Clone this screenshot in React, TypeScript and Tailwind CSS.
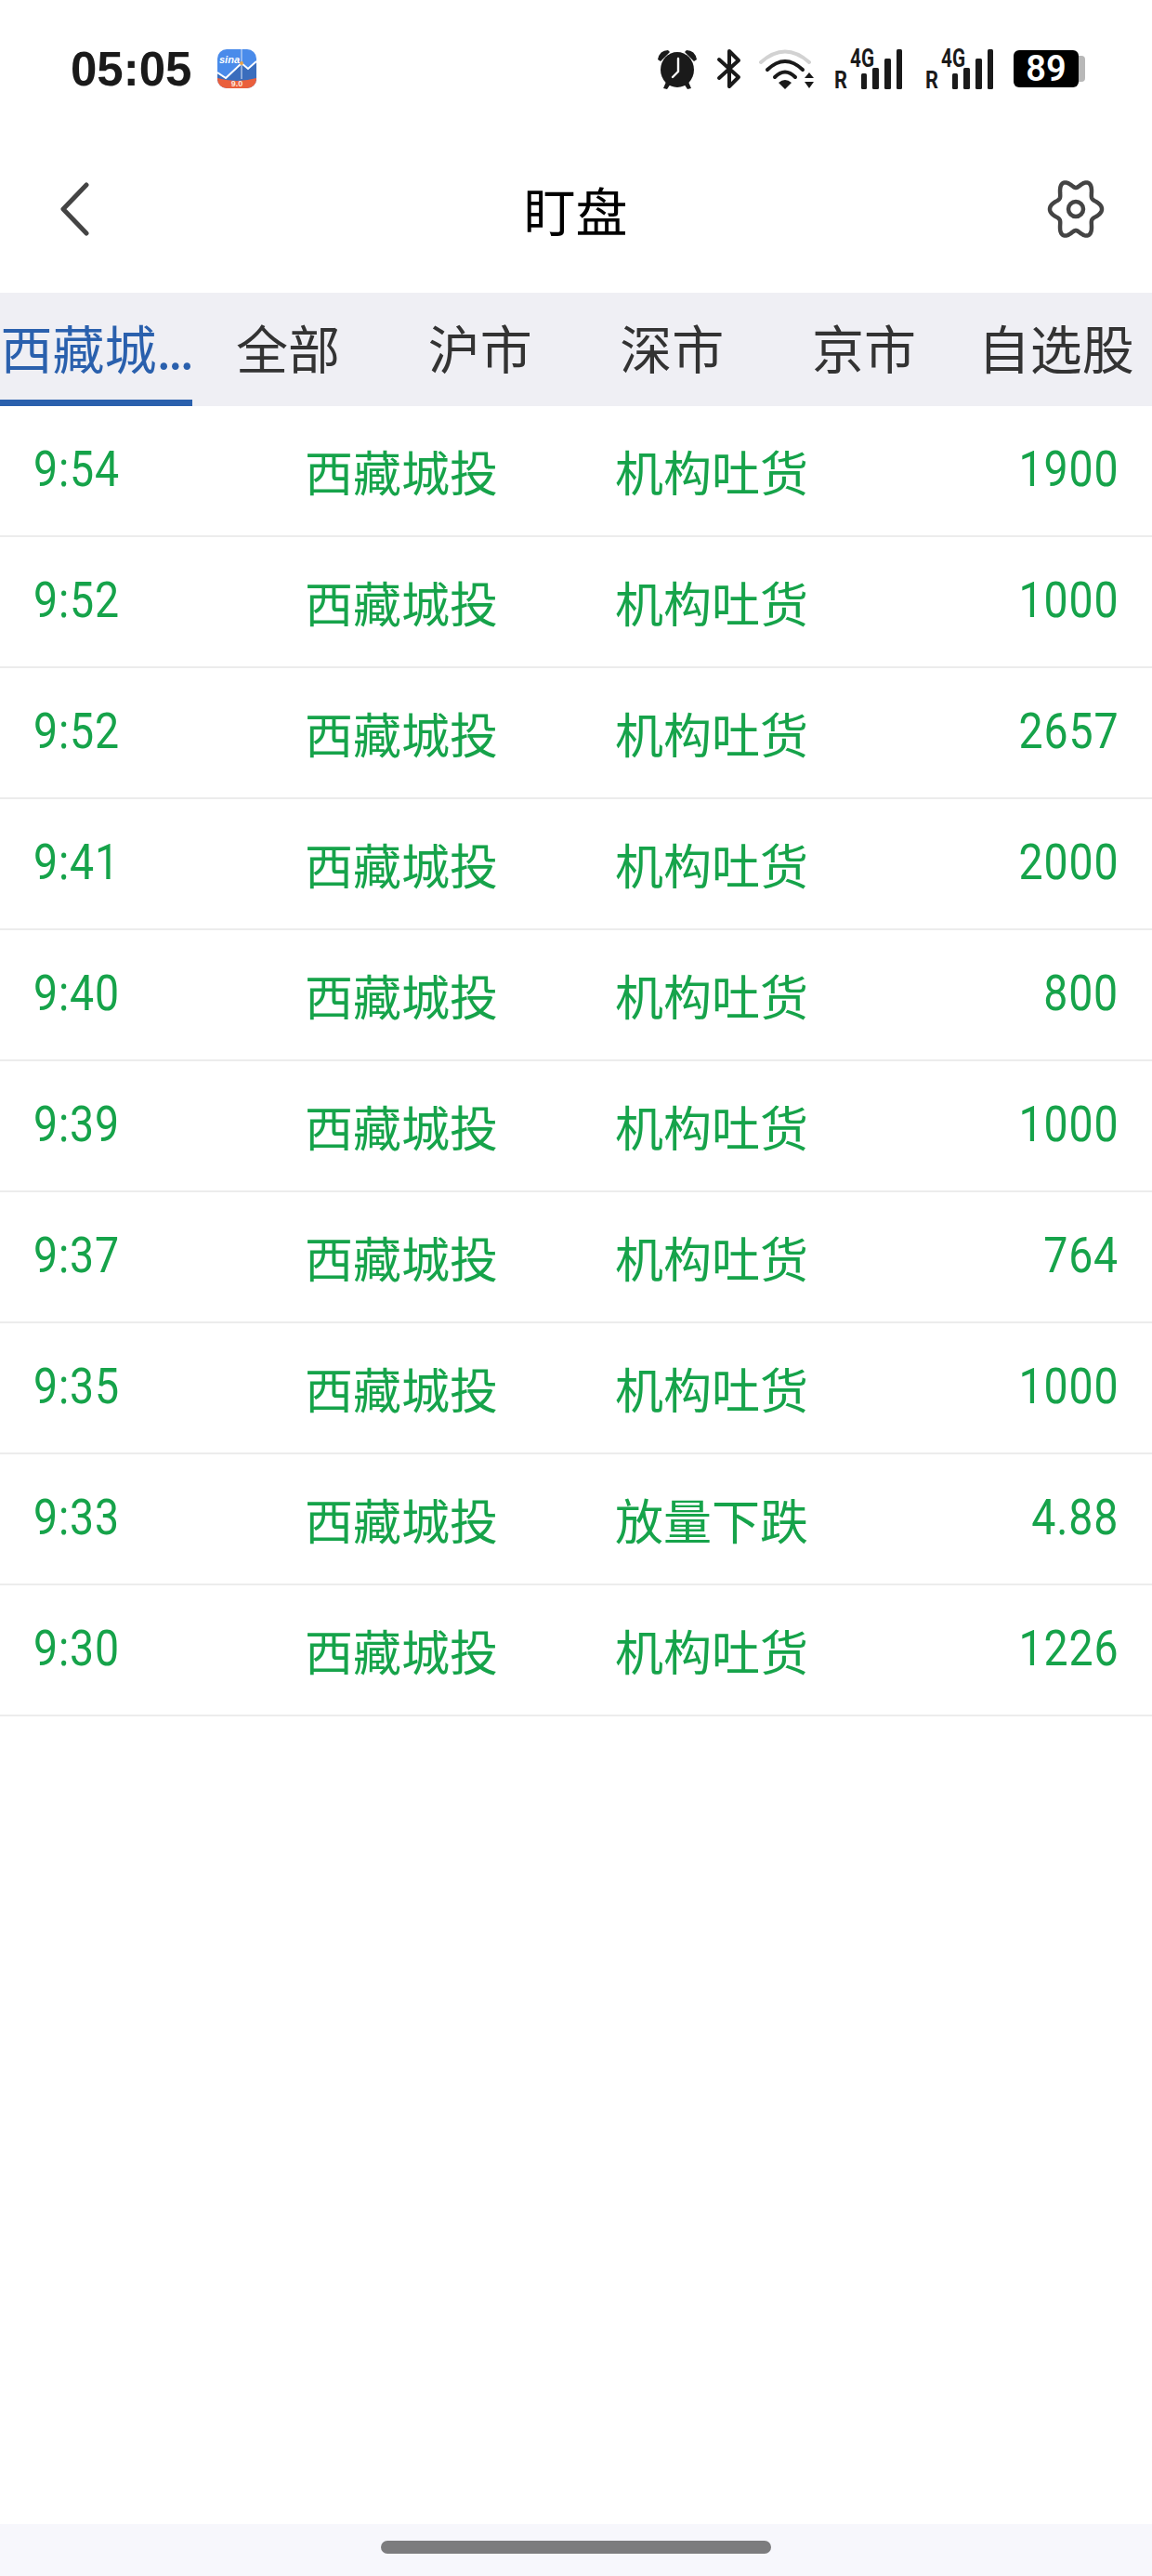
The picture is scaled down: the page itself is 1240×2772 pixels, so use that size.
const rows = [
  { time: '9:54', type: '机构吐货', value: '1900' },
  { time: '9:52', type: '机构吐货', value: '1000' },
  { time: '9:52', type: '机构吐货', value: '2657' },
  { time: '9:41', type: '机构吐货', value: '2000' },
  { time: '9:40', type: '机构吐货', value: '800' },
  { time: '9:39', type: '机构吐货', value: '1000' },
  { time: '9:37', type: '机构吐货', value: '764' },
  { time: '9:35', type: '机构吐货', value: '1000' },
  { time: '9:33', type: '放量下跌', value: '4.88' },
  { time: '9:30', type: '机构吐货', value: '1226' },
];

const tabs = ['全部', '沪市', '深市', '京市', '自选股'];

// six soft lobes, dips at top and bottom
const gearPath = () => {
  const pts: string[] = [];
  for (let i = 0; i < 180; i++) {
    const a = (i / 180) * Math.PI * 2;
    const r = 24 + 4 * Math.cos(6 * a);
    pts.push(`${(32 + r * Math.cos(a)).toFixed(2)} ${(32 + 1.15 * r * Math.sin(a)).toFixed(2)}`);
  }
  return `M${pts.join('L')}Z`;
};

const AppIcon = () => (
  <svg width="42" height="42" viewBox="0 0 42 42" className="ml-[28px]">
    <rect width="42" height="42" rx="10" fill="#4a8bea" />
    <path d="M0 26 L10 32 L26 15 L33 22 L42 14 V34 H0Z" fill="#3a6dbd" />
    <path d="M0 25 L9 31 L26 15 L33 21 L42 13" fill="none" stroke="#fff" strokeWidth="2" />
    <path d="M26 0V32" stroke="#dfe8f7" strokeWidth="1" />
    <circle cx="26" cy="15" r="2" fill="#e6a24a" />
    <path d="M0 31 Q21 37 42 31 V32 A10 10 0 0 1 32 42 H10 A10 10 0 0 1 0 32Z" fill="#ea5f3c" />
    <text x="2" y="15" fontSize="11" fontStyle="italic" fontWeight="700" fill="#fff" fontFamily="'Liberation Sans', sans-serif">sina</text>
    <text x="21" y="40" fontSize="9" textAnchor="middle" fontWeight="700" fill="#fde7dd" fontFamily="'Liberation Sans', sans-serif">9.0</text>
  </svg>
);

const AlarmIcon = () => (
  <svg width="44" height="44" viewBox="0 0 44 44">
    <path d="M1 12 Q3 2 12 2 L14 4 L4 14Z M43 12 Q41 2 32 2 L30 4 L40 14Z" fill="#1a1a1a" />
    <path d="M10 36 L7 43 L11 44 L15 38Z M34 36 L37 43 L33 44 L29 38Z" fill="#1a1a1a" />
    <ellipse cx="22" cy="23" rx="18" ry="19" fill="#1a1a1a" />
    <path d="M23 11 V25 L17 31" fill="none" stroke="#fff" strokeWidth="2.4" strokeLinecap="round" strokeLinejoin="round" />
  </svg>
);

const BluetoothIcon = () => (
  <svg width="28" height="44" viewBox="0 0 28 44">
    <path d="M3 12 L24 31 L14 41 V3 L24 13 L3 32" fill="none" stroke="#1a1a1a" strokeWidth="4" strokeLinecap="round" strokeLinejoin="round" />
  </svg>
);

const WifiIcon = () => (
  <svg width="60" height="44" viewBox="0 0 60 44">
    <path d="M2 15 Q28 -8 54 15" fill="none" stroke="#d2d2d2" strokeWidth="4" strokeLinecap="round" />
    <path d="M9 23 Q28 5 47 23" fill="none" stroke="#1a1a1a" strokeWidth="4" strokeLinecap="round" />
    <path d="M17 31 Q28 20 39 31" fill="none" stroke="#1a1a1a" strokeWidth="4" strokeLinecap="round" />
    <path d="M21 37 Q28 31 35 37 L28 44Z" fill="#1a1a1a" />
    <path d="M49 32 L54 26 L59 32Z M49 36 H59 L54 43Z" fill="#1a1a1a" />
  </svg>
);

const SignalIcon = () => (
  <svg width="74" height="44" viewBox="0 0 74 44" className="overflow-visible">
    <text x="0" y="43" fontSize="25" textLength="14" lengthAdjust="spacingAndGlyphs" fontWeight="700" fill="#1a1a1a" fontFamily="'Roboto', sans-serif">R</text>
    <text x="17" y="20" fontSize="28" textLength="26" lengthAdjust="spacingAndGlyphs" fontWeight="700" fill="#1a1a1a" fontFamily="'Roboto', sans-serif">4G</text>
    <rect x="29" y="27" width="6" height="17" rx="1.5" fill="#1a1a1a" />
    <rect x="41" y="21" width="7" height="23" rx="1.5" fill="#1a1a1a" />
    <rect x="54" y="11" width="7" height="33" rx="1.5" fill="#1a1a1a" />
    <rect x="67" y="1" width="6" height="43" rx="1.5" fill="#1a1a1a" />
  </svg>
);

const BatteryIcon = () => (
  <div className="flex items-center">
    <div className="w-[70px] h-[40px] bg-black rounded-[6px] flex items-center justify-center text-white text-[38px] leading-none font-semibold font-['Roboto',sans-serif]">
      89
    </div>
    <div className="w-[7px] h-[28px] bg-[#b8b8b8] rounded-r-[4px]" />
  </div>
);

export default function App() {
  return (
    <div className="w-[1240px] h-[2772px] bg-white flex flex-col font-['Noto_Sans_CJK_SC',sans-serif]">
      <div className="h-[150px] shrink-0 flex items-start pt-[52px] pl-[76px] pr-[72px] justify-between">
        <div className="flex items-center h-[44px]">
          <span className="text-[51px] leading-none font-bold text-[#1a1a1a] font-['Liberation_Sans',sans-serif]">05:05</span>
          <AppIcon />
        </div>
        <div className="flex items-center">
          <AlarmIcon />
          <div className="ml-[20px]"><BluetoothIcon /></div>
          <div className="ml-[18px]"><WifiIcon /></div>
          <div className="ml-[21px]"><SignalIcon /></div>
          <div className="ml-[24px]"><SignalIcon /></div>
          <div className="ml-[21px]"><BatteryIcon /></div>
        </div>
      </div>

      <div className="h-[165px] shrink-0 grid grid-cols-[1fr_auto_1fr] items-center pl-[64px] pr-[50px] pb-[15px]">
        <svg width="32" height="58" viewBox="0 0 32 58">
          <path d="M29 3 L4 29 L29 55" fill="none" stroke="#444" strokeWidth="5" strokeLinecap="round" strokeLinejoin="round" />
        </svg>
        <h1 className="text-[56px] leading-none font-normal text-black pr-[15px]">盯盘</h1>
        <svg width="64" height="64" viewBox="0 0 64 64" className="justify-self-end">
          <path d={gearPath()} fill="none" stroke="#444" strokeWidth="4.5" strokeLinejoin="round" />
          <circle cx="32" cy="32" r="8" fill="none" stroke="#444" strokeWidth="4.5" />
        </svg>
      </div>

      <div className="h-[122px] shrink-0 grid grid-cols-6 bg-[#efeff4] text-[56px] leading-none whitespace-nowrap">
        <div className="flex items-center justify-center text-[#2a60ad] border-b-[7px] border-[#2a60ad]">
          西藏城<span className="tracking-[-3px]">...</span>
        </div>
        {tabs.map((tab) => (
          <div key={tab} className="flex items-center justify-center text-[#333333] pb-[7px]">
            {tab}
          </div>
        ))}
      </div>

      <div className="flex-1 flex flex-col">
        {rows.map((row, i) => (
          <div
            key={i}
            className="h-[141px] shrink-0 grid grid-cols-[292px_334px_1fr_auto] items-center pl-[36px] pr-[36px] border-b-2 border-[#ececec] text-[#16a34a] text-[52px] leading-none"
          >
            <span className="text-[54px] tracking-[1px] pb-[4px] origin-left scale-x-[0.86] font-['Roboto',sans-serif]">{row.time}</span>
            <span>西藏城投</span>
            <span>{row.type}</span>
            <span className="text-[54px] tracking-[1px] pb-[4px] origin-right scale-x-[0.86] font-['Roboto',sans-serif]">{row.value}</span>
          </div>
        ))}
      </div>

      <div className="h-[56px] shrink-0 bg-[#f7f7fc] flex items-center justify-center pb-[6px]">
        <div className="w-[420px] h-[14px] rounded-full bg-[#7c7c7e]" />
      </div>
    </div>
  );
}
